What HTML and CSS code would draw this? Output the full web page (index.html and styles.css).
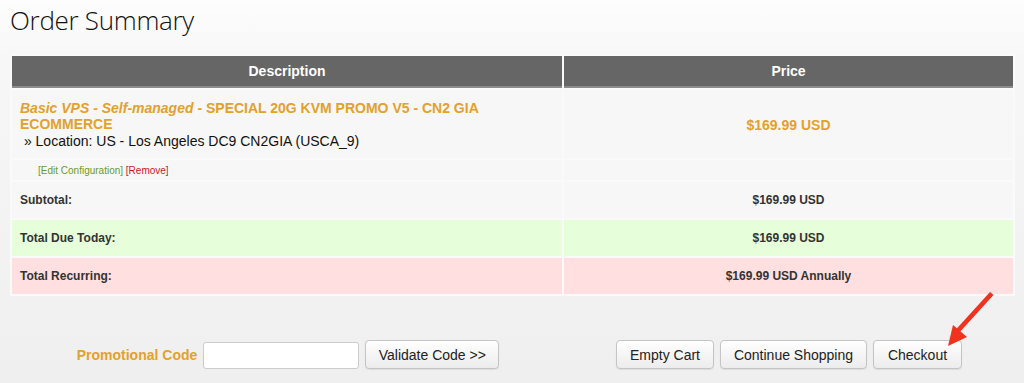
FILE: index.html
```html
<!DOCTYPE html>
<html lang="en">

<head>
  <meta charset="UTF-8">
  <title>Order Summary</title>
  <link rel="stylesheet" href="styles.css">
</head>

<body>
  <div class="page">
    <h1 class="title">Order Summary</h1>

    <table class="cart">
      <tr>
        <th class="col-desc">Description</th>
        <th class="col-price">Price</th>
      </tr>
      <tr class="item">
        <td>
          <div class="product"><em>Basic VPS - Self-managed</em> - SPECIAL 20G KVM PROMO V5 - CN2 GIA ECOMMERCE</div>
          <div class="option">&nbsp;&raquo; Location: US - Los Angeles DC9 CN2GIA (USCA_9)</div>
        </td>
        <td class="price product-price">$169.99 USD</td>
      </tr>
      <tr class="actions">
        <td><span class="edit">[Edit Configuration]</span> <span class="remove">[Remove]</span></td>
        <td></td>
      </tr>
      <tr class="sum">
        <td>Subtotal:</td>
        <td class="price">$169.99 USD</td>
      </tr>
      <tr class="sum due">
        <td>Total Due Today:</td>
        <td class="price">$169.99 USD</td>
      </tr>
      <tr class="sum recurring">
        <td>Total Recurring:</td>
        <td class="price">$169.99 USD Annually</td>
      </tr>
    </table>

    <div class="bottom">
      <div class="promo">
        <span class="promo-label">Promotional Code</span>
        <input class="promo-input" type="text">
        <button class="btn btn-validate">Validate Code &gt;&gt;</button>
      </div>
      <div class="cart-buttons">
        <button class="btn btn-empty">Empty Cart</button>
        <button class="btn btn-continue">Continue Shopping</button>
        <button class="btn btn-checkout">Checkout</button>
      </div>
    </div>

    <svg class="arrow" width="1024" height="383" viewBox="0 0 1024 383">
      <path d="M990 292 L993.5 295 L958 334 L954.5 331 Z" fill="#f0321e"/>
      <polygon points="948,346 953,325 967,337" fill="#f0321e"/>
    </svg>
  </div>
</body>

</html>
```

FILE: styles.css
```css
body {
  margin: 0;
  background: linear-gradient(#fdfdfd 0, #f7f7f7 60px, #f1f1f1 300px, #efefef 383px);
  font-family: "Liberation Sans", Arial, sans-serif;
  color: #222;
  height: 383px;
  overflow: hidden;
}

.page {
  position: relative;
  height: 383px;
}

.title {
  margin: 0;
  padding: 3px 0 0 10px;
  font-family: "Open Sans", sans-serif;
  font-weight: 300;
  font-size: 26px;
  line-height: 35px;
  color: #111;
  letter-spacing: -0.3px;
}

.cart {
  margin: 16px 0 0 10px;
  width: 1005px;
  border-collapse: separate;
  border-spacing: 2px;
  background: #fafafa;
}

.cart th {
  background: #666;
  color: #fff;
  font-size: 14px;
  font-weight: bold;
  height: 30px;
  padding: 0;
  border-bottom: 2px solid #8c8c8c;
}

.col-desc {
  width: 550px;
}

.cart td {
  background: #f7f7f7;
  padding: 0 8px;
  font-size: 12px;
}

.cart .item td {
  height: 66px;
  padding-top: 2px;
}

.product {
  color: #e3a12a;
  font-size: 14px;
  font-weight: bold;
  line-height: 16px;
}

.option {
  font-size: 14px;
  line-height: 18px;
  color: #111;
}

.price {
  text-align: center;
  font-weight: bold;
  color: #333;
}

.cart .product-price {
  color: #e3a12a;
  font-size: 14px;
}

.cart .actions td {
  height: 20px;
  font-size: 10px;
  padding-left: 26px;
}

.edit {
  color: #6b9a2e;
}

.remove {
  color: #c8191e;
}

.sum td {
  height: 36px;
  font-weight: bold;
  color: #333;
}

.cart .due td {
  background: #e6ffda;
}

.cart .recurring td {
  background: #ffdfdf;
}

.bottom {
  display: flex;
  margin: 44px 0 0 12px;
  width: 1002px;
}

.promo,
.cart-buttons {
  display: flex;
  justify-content: center;
  align-items: baseline;
  gap: 6px;
}

.promo {
  width: 552px;
}

.cart-buttons {
  flex: 1;
}

.promo-label {
  color: #e3a12a;
  font-weight: bold;
  font-size: 14px;
}

.promo-input {
  width: 156px;
  height: 27px;
  box-sizing: border-box;
  border: 1px solid #ccc;
  border-radius: 3px;
  background: #fff;
  margin: 0;
}

.btn {
  height: 29px;
  box-sizing: border-box;
  margin: 0;
  padding: 0;
  white-space: nowrap;
  font-family: "Liberation Sans", Arial, sans-serif;
  font-size: 14px;
  color: #222;
  background: linear-gradient(#ffffff, #ececec);
  border: 1px solid #c4c4c4;
  border-radius: 4px;
  box-shadow: 0 1px 1px rgba(0, 0, 0, 0.08);
}

.btn-validate {
  width: 134px;
}

.btn-empty {
  width: 98px;
}

.btn-continue {
  width: 147px;
}

.btn-checkout {
  width: 89px;
}

.arrow {
  position: absolute;
  left: 0;
  top: 0;
  pointer-events: none;
}
```
